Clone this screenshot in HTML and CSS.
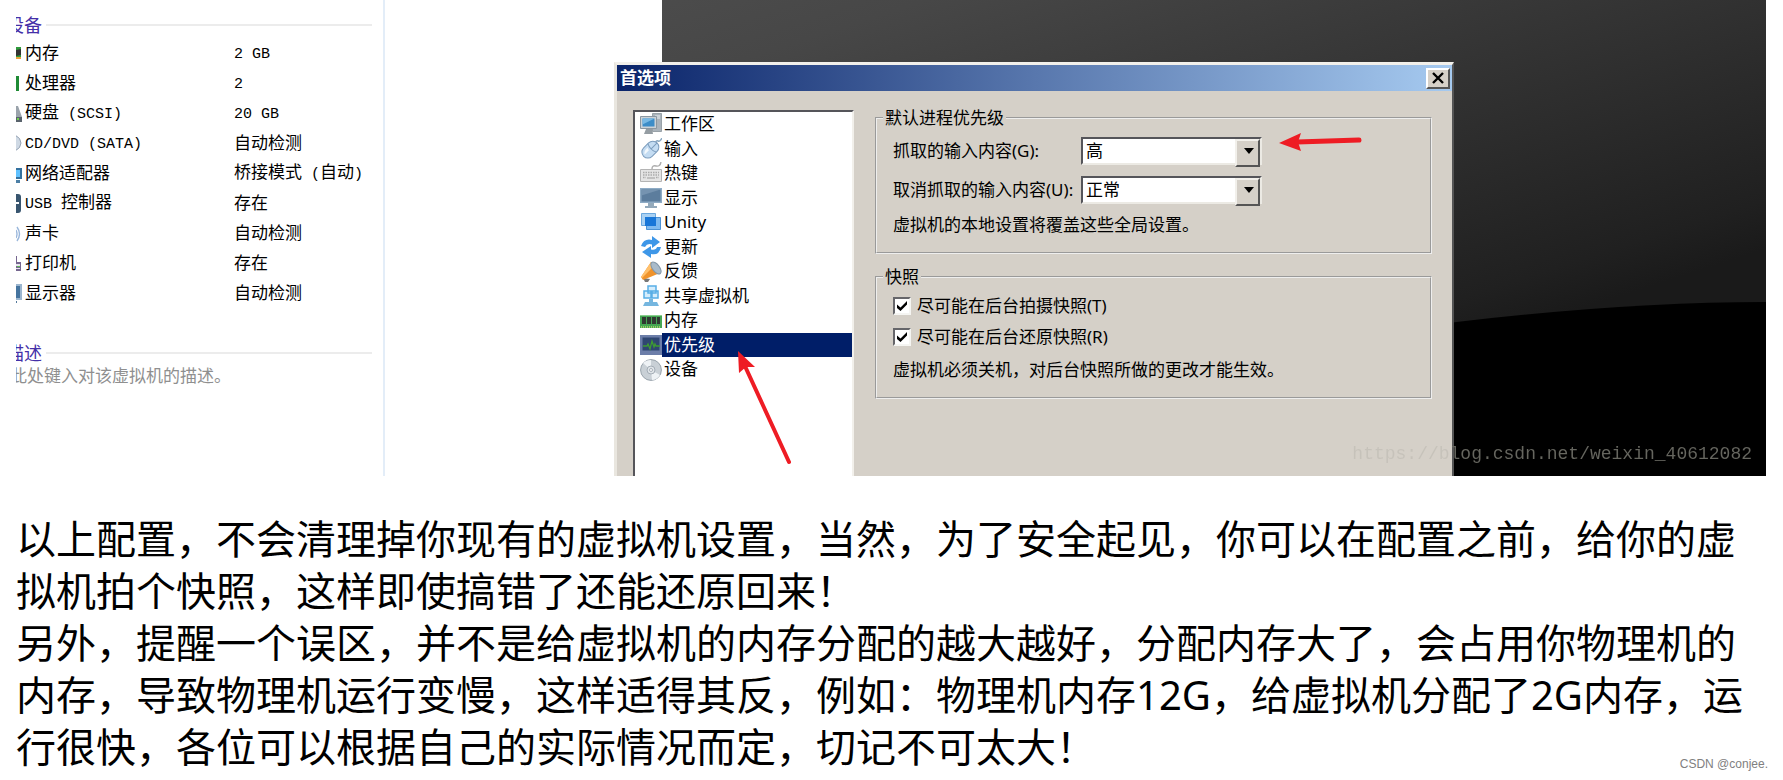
FILE: index.html
```html
<!DOCTYPE html>
<html lang="zh-CN">
<head>
<meta charset="utf-8">
<title>虚拟机优先级设置</title>
<link rel="stylesheet" href="styles.css">
</head>
<body>
<main class="page">
  <section class="scene">
    <aside class="summary">
      <h2 class="summary-title"><span>设备</span></h2>
      <dl class="devices">
        <div class="device"><svg class="clip-icon" viewBox="0 0 6 20"><path fill="#2f9a3c" d="M0 4h5v12H0z"/><path fill="#333" d="M0 7l5-1v6l-5 1z"/><path fill="#e9a13c" d="M0 14h5v2H0z"/></svg><dt>内存</dt><dd><span class="latin">2 GB</span></dd></div>
        <div class="device"><svg class="clip-icon" viewBox="0 0 6 20"><path fill="#1f8b35" d="M0 3h3v15H0z"/></svg><dt>处理器</dt><dd><span class="latin">2</span></dd></div>
        <div class="device"><svg class="clip-icon" viewBox="0 0 6 20"><path fill="#9aa3ab" d="M0 3h2l4 11H0z"/><path fill="#59636c" d="M0 14h6v5H0z"/><path fill="#6fd04a" d="M1 15h2v2H1z"/></svg><dt>硬盘<span class="latin"> (SCSI)</span></dt><dd><span class="latin">20 GB</span></dd></div>
        <div class="device"><svg class="clip-icon" viewBox="0 0 6 20"><path fill="#cfd9e4" stroke="#96a3b3" d="M-1 2q6 3 6 8t-6 8"/></svg><dt><span class="latin">CD/DVD (SATA)</span></dt><dd>自动检测</dd></div>
        <div class="device"><svg class="clip-icon" viewBox="0 0 6 20"><path fill="#34719f" d="M0 5h6v11H0z"/><path fill="#5fc1ff" d="M0 7h4v7H0z"/><path fill="#4c7fa6" d="M0 17h4v3H0z"/></svg><dt>网络适配器</dt><dd>桥接模式<span class="latin"> (</span>自动<span class="latin">)</span></dd></div>
        <div class="device"><svg class="clip-icon" viewBox="0 0 6 20"><path fill="#38556f" d="M0 1h2q3 0 3 3v13q0 3-3 3H0z"/><path fill="#fff" d="M0 9h3v2H0z"/></svg><dt><span class="latin">USB </span>控制器</dt><dd>存在</dd></div>
        <div class="device"><svg class="clip-icon" viewBox="0 0 6 20"><path fill="none" stroke="#9ab7dc" stroke-width="1.4" d="M0 7q2 4 0 8M1 4q5 7 0 14"/></svg><dt>声卡</dt><dd>自动检测</dd></div>
        <div class="device"><svg class="clip-icon" viewBox="0 0 6 20"><path fill="#76678f" d="M0 3h1v6h4v9H0z"/><path fill="#e9e6f0" d="M0 11h4v2H0zM0 15h4v1H0z"/><path fill="#5cbb55" d="M1 13h3v1H1z"/></svg><dt>打印机</dt><dd>存在</dd></div>
        <div class="device"><svg class="clip-icon" viewBox="0 0 6 20"><path fill="#9cb6cf" d="M0 1h6v16H0z"/><path fill="#45749f" d="M0 3h4v12H0z"/><path fill="#52789b" d="M0 18h1v2H0z"/></svg><dt>显示器</dt><dd>自动检测</dd></div>
      </dl>
      <h2 class="summary-title"><span>描述</span></h2>
      <p class="summary-note">此处键入对该虚拟机的描述。</p>
    </aside>
    <svg class="backdrop" viewBox="0 0 1104 476" preserveAspectRatio="none" aria-hidden="true">
      <defs><linearGradient id="sky" gradientUnits="userSpaceOnUse" x1="300" y1="-110" x2="480" y2="450"><stop offset="0" stop-color="#4c4c4c"/><stop offset=".16" stop-color="#474747"/><stop offset=".53" stop-color="#343434"/><stop offset=".92" stop-color="#202020"/><stop offset="1" stop-color="#1a1a1a"/></linearGradient></defs>
      <path fill="url(#sky)" d="M0 0h1104v476H0z"/>
      <path fill="#000" d="M500 368Q850 302 1104 302v174H500z"/>
    </svg>

    <div class="dialog" role="dialog" aria-labelledby="dialog-title">
      <header class="titlebar">
        <h1 id="dialog-title">首选项</h1>
        <button class="close" type="button" aria-label="关闭"><svg viewBox="0 0 12 12"><path d="M1 1l10 10M11 1L1 11" stroke="#000" stroke-width="2.4"/></svg></button>
      </header>
      <div class="dialog-body">
        <ul class="nav">
          <li><svg viewBox="0 0 22 22"><path fill="#aab3bb" stroke="#7f8991" stroke-width=".7" d="M12.500 .5h9v18h-9z"/><path stroke="#eef1f3" d="M15 3h5M15 5h5"/><path fill="#cbd2d7" stroke="#8b97a1" d="M.5 3.500h16v12H.5z"/><path fill="#3c8dc8" d="M2.500 5.500h12v8h-12z"/><path fill="#79b9e4" d="M2.500 5.500h12l-12 6z"/><path fill="#959da3" d="M6 16h6l1 5H4z"/></svg><span>工作区</span></li>
          <li><svg viewBox="0 0 22 22"><path fill="none" stroke="#8ba9c2" stroke-width="1.500" d="M15 6q1-4 3-3t4-3"/><g transform="rotate(45 10 12)"><rect x="4" y="2" width="12" height="19" rx="6" fill="#c4dcf2" stroke="#7b9cbd"/><path fill="none" stroke="#7b9cbd" d="M4 9q6 3 12 0M10 2v8"/><path fill="#f2f8fd" d="M6.500 12q1.500 1 3 1v6q-3-1-3-7z"/></g></svg><span>输入</span></li>
          <li><svg viewBox="0 0 22 22"><path fill="none" stroke="#adadad" stroke-width="1.400" d="M12 7q0-4 4-3t5-4"/><path fill="#e4e4e4" stroke="#b4b4b4" d="M.5 7.500h21v12H.5z"/><path stroke="#aaa" stroke-width="1.300" stroke-dasharray="1.500 1" d="M3 10.500h16M3 13h16M3 15.500h3M16 15.500h3"/><path stroke="#b4b4b4" stroke-width="1.500" d="M7 16h8"/></svg><span>热键</span></li>
          <li><svg viewBox="0 0 22 22"><path fill="#8eabc5" d="M0 1h22v15H0z"/><path fill="#5c7d9d" d="M1.500 2.500h19v12h-19z"/><path fill="#7593b0" d="M1.500 2.500h19l-19 6z"/><path fill="#93a9bb" d="M8 16h6v3h3v2H5v-2h3z"/></svg><span>显示</span></li>
          <li><svg viewBox="0 0 22 22"><path fill="#a9d1f3" stroke="#6ba8de" d="M1.500 2.500h14v12h-14z"/><path fill="#7fbaf0" stroke="#4c92d4" d="M6.500 6.500h14v12h-14z"/><path fill="#1876d8" d="M5 6h11v9H5z"/></svg><span>Unity</span></li>
          <li><svg viewBox="0 0 22 22"><path fill="#3e97e8" d="M1 10Q4 2 12 4V0l8 6-8 6V8.500Q7 7 5 11z"/><path fill="#3e97e8" d="M21 11q-2 9-10 7v4l-9-6 9-6v3.500q5 1 6-2.500z"/></svg><span>更新</span></li>
          <li><svg viewBox="0 0 22 22"><path fill="#777" d="M3 17l7 1-2 3H5z"/><path fill="#f0932b" d="M11 1l9 11L3 19l-2-3z"/><path fill="#ffc06c" d="M11 1l3 4L2 17l-1-1z"/><ellipse cx="16" cy="7" rx="3.500" ry="7" fill="#a9bbca" stroke="#8397a8" transform="rotate(-38 16 7)"/></svg><span>反馈</span></li>
          <li><svg viewBox="0 0 22 22"><path fill="#d5edfc" stroke="#58aee6" stroke-width="1.500" d="M8 1h8v7H8zM4 6h8v7H4zM11 6h7v7h-7z"/><path fill="#75b6df" d="M9 14h4v3h4l2 4H3l2-4h4z"/></svg><span>共享虚拟机</span></li>
          <li><svg viewBox="0 0 22 22"><path fill="#45a653" d="M0 5h22v13H0z"/><path fill="#88ce8d" d="M0 5h22v1H0z"/><path fill="#303a32" d="M2 7h4v7H2zM7 7h4v7H7zM12 7h4v7h-4zM17 7h3v7h-3z"/><path stroke="#b9d66b" stroke-width="1.500" stroke-dasharray="1 1" d="M1 17h20"/></svg><span>内存</span></li>
          <li class="selected"><svg viewBox="0 0 22 22"><path fill="#6c7ea9" d="M0 1h22v20H0z"/><path fill="#2f4671" d="M2.500 3.500h17v13h-17z"/><path fill="none" stroke="#3f9b32" stroke-width="1.300" d="M3 12h4l1-2 2 5 2-8 2 6 1-3 1 2h4"/></svg><span>优先级</span></li>
          <li><svg viewBox="0 0 22 22"><circle cx="11" cy="11" r="10.400" fill="#c9d0d6" stroke="#98a2ab"/><path fill="#eef2f5" d="M11 11L3 4q3-3 8-3zM11 11l9 5q-3 5-8 5z"/><circle cx="11" cy="11" r="4" fill="#dfe4e8" stroke="#a4adb6"/><circle cx="11" cy="11" r="1.500" fill="#fff" stroke="#8c98a4" stroke-width=".7"/></svg><span>设备</span></li>
        </ul>
        <form class="groups">
          <fieldset>
            <legend>默认进程优先级</legend>
            <div class="field">
              <label for="grabbed">抓取的输入内容(G):</label>
              <span class="combo"><select id="grabbed"><option>高</option><option>正常</option></select></span>
            </div>
            <div class="field">
              <label for="ungrabbed">取消抓取的输入内容(U):</label>
              <span class="combo"><select id="ungrabbed"><option>正常</option><option>高</option></select></span>
            </div>
            <p>虚拟机的本地设置将覆盖这些全局设置。</p>
          </fieldset>
          <fieldset>
            <legend>快照</legend>
            <div class="check"><input type="checkbox" id="take" checked><label for="take">尽可能在后台拍摄快照(T)</label></div>
            <div class="check"><input type="checkbox" id="restore" checked><label for="restore">尽可能在后台还原快照(R)</label></div>
            <p>虚拟机必须关机，对后台快照所做的更改才能生效。</p>
          </fieldset>
        </form>
      </div>
      <svg class="arrow arrow-nav" viewBox="0 0 56 116" aria-hidden="true"><path fill="#ee1c24" d="M1 1l17 16-9 0-7 6z"/><path stroke="#ee1c24" stroke-width="4" stroke-linecap="round" d="M7 14l45 98"/></svg>
      <svg class="arrow arrow-select" viewBox="0 0 84 18" aria-hidden="true"><path fill="#ee1c24" d="M0 10L22 0l-3 9 3 9z"/><path stroke="#ee1c24" stroke-width="5" stroke-linecap="round" d="M18 9l62-2"/></svg>
    </div>
    <span class="watermark">https://blog.csdn.net/weixin_40612082</span>
  </section>

  <article class="text">
    <p>以上配置，不会清理掉你现有的虚拟机设置，当然，为了安全起见，你可以在配置之前，给你的虚拟机拍个快照，这样即使搞错了还能还原回来！</p>
    <p>另外，提醒一个误区，并不是给虚拟机的内存分配的越大越好，分配内存大了，会占用你物理机的内存，导致物理机运行变慢，这样适得其反，例如：物理机内存12G，给虚拟机分配了2G内存，运行很快，各位可以根据自己的实际情况而定，切记不可太大！</p>
  </article>
  <small class="credit">CSDN @conjee.</small>
</main>
</body>
</html>
```
FILE: styles.css
```css
* {
  box-sizing: border-box;
}

body {
  margin: 0;
  background: #fff;
  color: #000;
  font-family: "Noto Sans", "Noto Sans CJK SC", sans-serif;
}

h1, h2, p, dl, dd, ul {
  margin: 0;
  padding: 0;
}

.page {
  position: relative;
  min-height: 100vh;
  padding: 0 16px;
}

/* Virtual machine window */
.scene {
  position: relative;
  display: grid;
  grid-template-columns: 369px 277px 1fr;
  min-height: 476px;
  margin-right: 1px;
  overflow: hidden;
  font-size: 17px;
  line-height: 20px;
}

.summary {
  padding: 12px 11px 0 0;
  border-right: 2px solid #e3edf8;
  overflow: hidden;
}

.summary-title {
  display: flex;
  align-items: center;
  gap: 4px;
  margin-left: -10px;
  color: #4530a8;
  font-size: 18px;
  font-weight: 400;
  line-height: 26px;
}

.summary-title::after {
  content: "";
  flex: 1;
  height: 2px;
  background: #ececec;
}

.devices {
  margin-bottom: 32px;
}

.device {
  display: grid;
  grid-template-columns: 6px 206px 1fr;
  gap: 3px;
  align-items: center;
  height: 30px;
  white-space: pre;
}

.clip-icon {
  width: 6px;
  height: 20px;
}

.latin {
  font-family: "Liberation Mono", monospace;
  font-size: 15px;
}

.summary-note {
  margin-left: -6px;
  color: #8f8f8f;
  line-height: 20px;
}

.backdrop {
  grid-column: 3;
  width: 100%;
  height: 100%;
}

/* Preferences dialog */
.dialog {
  position: absolute;
  top: 62px;
  bottom: 0;
  left: 598px;
  display: flex;
  flex-direction: column;
  width: 840px;
  border: solid;
  border-width: 3px 2px 0 3px;
  border-color: #f2f0eb #555 #555 #e9e6df;
  background: #d5d0c8;
}

.titlebar {
  display: flex;
  align-items: center;
  justify-content: space-between;
  height: 26px;
  padding: 0 2px 0 3px;
  background: linear-gradient(90deg, #0a246a, #a6caf0);
  color: #fff;
}

.titlebar h1 {
  font-size: 17px;
  line-height: 26px;
}

.close {
  display: grid;
  place-items: center;
  width: 24px;
  height: 21px;
  padding: 0;
  border: 2px solid;
  border-color: #fff #555 #555 #fff;
  background: #d5d0c8;
}

.close svg {
  width: 12px;
  height: 12px;
}

.dialog-body {
  display: flex;
  flex: 1;
  gap: 21px;
  padding: 17px 20px 0 16px;
}

.nav {
  display: grid;
  grid-template-rows: repeat(11, 1fr);
  align-self: stretch;
  width: 221px;
  margin-top: 2px;
  padding-bottom: 94px;
  border: 2px solid;
  border-color: #55555a #f2f0eb #f2f0eb #55555a;
  border-bottom: 0;
  background: #fff;
  list-style: none;
}

.nav li {
  display: flex;
  align-items: center;
  padding-left: 5px;
}

.nav svg {
  width: 22px;
  height: 22px;
}

.nav span {
  flex: 1;
  align-self: stretch;
  padding: 2px;
}

.nav .selected span {
  background: #001e68;
  color: #fff;
}

.groups {
  display: flex;
  flex: 1;
  flex-direction: column;
  gap: 13px;
}

fieldset {
  display: flex;
  flex-direction: column;
  gap: 11px;
  min-width: 0;
  margin: 0;
  padding: 9px 16px 17px;
  border: 2px groove #eee;
}

legend {
  margin-left: -10px;
  padding: 0 2px;
  line-height: 20px;
}

.field {
  display: grid;
  grid-template-columns: 188px 181px;
  align-items: center;
  white-space: nowrap;
}

.combo {
  position: relative;
  display: grid;
  height: 28px;
  border: 2px solid;
  border-color: #55555a #eceae4 #eceae4 #55555a;
  background: #fff;
}

.combo select {
  appearance: none;
  width: 100%;
  padding: 0 24px 0 3px;
  border: 0;
  background: transparent;
  color: #000;
  font: inherit;
}

.combo::before {
  content: "";
  position: absolute;
  top: 0;
  right: 0;
  width: 21px;
  height: 24px;
  border: 2px solid;
  border-color: #f2f0eb #555 #555 #f2f0eb;
  background: #d5d0c8;
  pointer-events: none;
}

.combo::after {
  content: "";
  position: absolute;
  top: 9px;
  right: 6px;
  border: solid transparent;
  border-width: 6px 5px 0;
  border-top-color: #000;
  pointer-events: none;
}

.check {
  display: flex;
  align-items: center;
  gap: 6px;
}

.check + p {
  margin-top: 2px;
}

.check input {
  appearance: none;
  display: grid;
  place-items: center;
  width: 18px;
  height: 18px;
  margin: 0;
  border: 2px solid;
  border-color: #66666a #f5f5f2 #f5f5f2 #66666a;
  background: #fff;
}

.check input:checked::before {
  content: "";
  width: 10px;
  height: 10px;
  background: #000;
  clip-path: polygon(0 35%, 35% 65%, 100% 0, 100% 35%, 35% 100%, 0 70%);
}

.arrow {
  position: absolute;
}

.arrow-nav {
  top: 285px;
  left: 120px;
  width: 56px;
  height: 116px;
}

.arrow-select {
  top: 68px;
  left: 662px;
  width: 84px;
  height: 18px;
}

.watermark {
  position: absolute;
  right: 14px;
  bottom: 12px;
  background: linear-gradient(90deg, #c6c2ba 25%, #66665f 25%);
  background-clip: text;
  color: transparent;
  font-family: "Liberation Mono", monospace;
  font-size: 18px;
}

/* Article text */
.text {
  padding-top: 37px;
  font-size: 40px;
  line-height: 52px;
}

.credit {
  position: absolute;
  right: 15px;
  bottom: 6px;
  color: #808080;
  font-family: "Liberation Sans", Arial, sans-serif;
  font-size: 12px;
  line-height: 20px;
}
```
